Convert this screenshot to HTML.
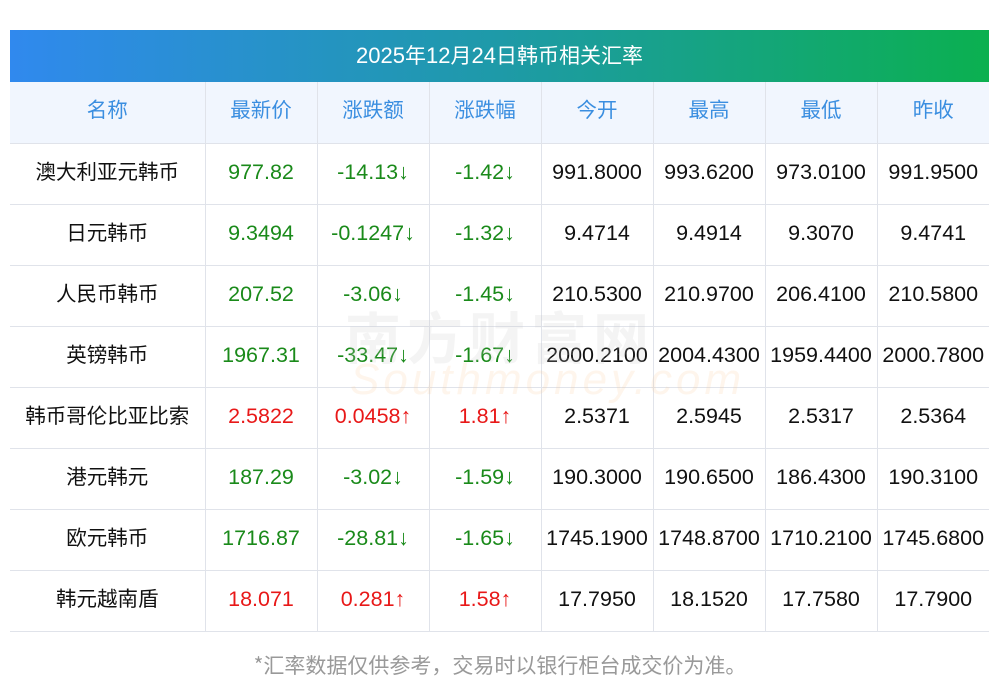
<!DOCTYPE html>
<html><head><meta charset="utf-8"><style>
body{margin:0;background:#fff;width:1000px;height:697px;position:relative;overflow:hidden;font-family:"Liberation Sans","Noto Sans CJK SC",sans-serif}
.title{position:absolute;left:10px;top:30px;width:979px;height:52px;background:linear-gradient(90deg,#3089ee,#1e9aa8 50%,#0bb050);color:#fff;font-size:22px;line-height:50px;text-align:center}
.title span{font-family:"Noto Sans CJK SC",sans-serif;font-size:21px}
table{position:absolute;left:10px;top:82px;width:979px;border-collapse:collapse;table-layout:fixed}
td{border:1px solid #e0e3ea;height:61px;text-align:center;font-size:21.5px;color:#111;padding:0 0 3px 0;white-space:nowrap;box-sizing:border-box}
td.c{font-family:"Noto Sans CJK SC",sans-serif;font-size:20.5px;padding:0 0 8px 0}
tr td:first-child{border-left:none}
tr td:last-child{border-right:none}
tr:first-child td{border-top:none;background:#f1f6fe;color:#3a8ee0;font-family:"Noto Sans CJK SC",sans-serif;font-size:20.5px;padding:0 0 8px 0}
.g{color:#1a8a1a}.r{color:#e81818}
.foot{position:absolute;top:650px;width:1000px;text-align:center;color:#999;font-size:21px;font-family:"Noto Sans CJK SC",sans-serif}
.wm{position:absolute;left:345px;top:295px;font-size:56px;color:rgba(200,200,200,.2);letter-spacing:6px;font-weight:bold}
.wm2{position:absolute;left:350px;top:355px;font-size:44px;color:rgba(250,200,150,.18);font-style:italic;letter-spacing:4px}
</style></head><body>
<div class="title">2025<span>年</span>12<span>月</span>24<span>日韩币相关汇率</span></div>
<table>
<colgroup><col style="width:195px"><col style="width:112px"><col style="width:112px"><col style="width:112px"><col style="width:112px"><col style="width:112px"><col style="width:112px"><col style="width:112px"></colgroup>
<tr><td>名称</td><td>最新价</td><td>涨跌额</td><td>涨跌幅</td><td>今开</td><td>最高</td><td>最低</td><td>昨收</td></tr>
<tr><td class="c">澳大利亚元韩币</td><td class="g">977.82</td><td class="g">-14.13↓</td><td class="g">-1.42↓</td><td>991.8000</td><td>993.6200</td><td>973.0100</td><td>991.9500</td></tr>
<tr><td class="c">日元韩币</td><td class="g">9.3494</td><td class="g">-0.1247↓</td><td class="g">-1.32↓</td><td>9.4714</td><td>9.4914</td><td>9.3070</td><td>9.4741</td></tr>
<tr><td class="c">人民币韩币</td><td class="g">207.52</td><td class="g">-3.06↓</td><td class="g">-1.45↓</td><td>210.5300</td><td>210.9700</td><td>206.4100</td><td>210.5800</td></tr>
<tr><td class="c">英镑韩币</td><td class="g">1967.31</td><td class="g">-33.47↓</td><td class="g">-1.67↓</td><td>2000.2100</td><td>2004.4300</td><td>1959.4400</td><td>2000.7800</td></tr>
<tr><td class="c">韩币哥伦比亚比索</td><td class="r">2.5822</td><td class="r">0.0458↑</td><td class="r">1.81↑</td><td>2.5371</td><td>2.5945</td><td>2.5317</td><td>2.5364</td></tr>
<tr><td class="c">港元韩元</td><td class="g">187.29</td><td class="g">-3.02↓</td><td class="g">-1.59↓</td><td>190.3000</td><td>190.6500</td><td>186.4300</td><td>190.3100</td></tr>
<tr><td class="c">欧元韩币</td><td class="g">1716.87</td><td class="g">-28.81↓</td><td class="g">-1.65↓</td><td>1745.1900</td><td>1748.8700</td><td>1710.2100</td><td>1745.6800</td></tr>
<tr><td class="c">韩元越南盾</td><td class="r">18.071</td><td class="r">0.281↑</td><td class="r">1.58↑</td><td>17.7950</td><td>18.1520</td><td>17.7580</td><td>17.7900</td></tr>
</table>
<div class="wm">南方财富网</div>
<div class="wm2">Southmoney.com</div>
<div class="foot">*汇率数据仅供参考，交易时以银行柜台成交价为准。</div>
</body></html>
